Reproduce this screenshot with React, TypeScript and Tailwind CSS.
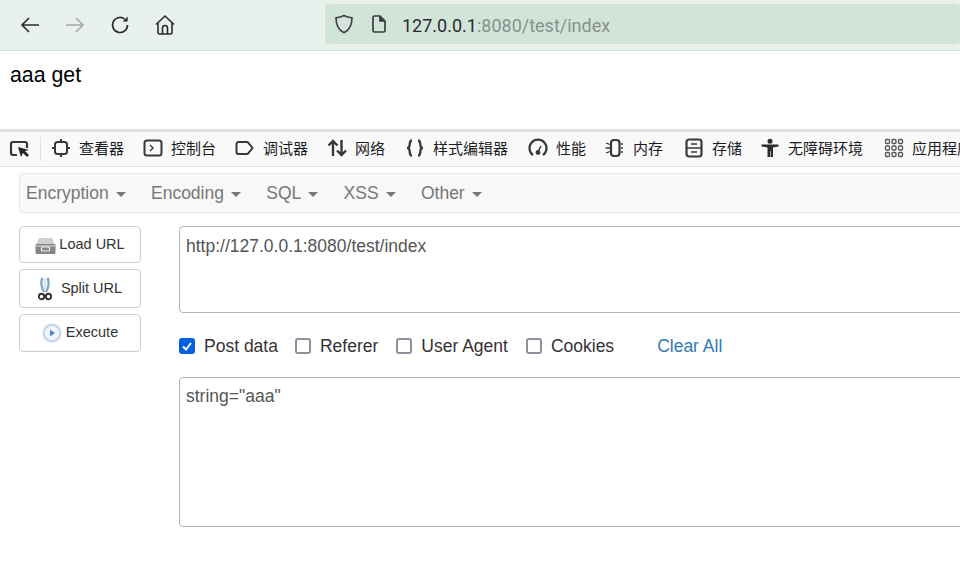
import React from "react";

const sans = "font-['Liberation_Sans','Noto_Sans_CJK_SC',sans-serif]";

function Tab({ icon, label, w }: { icon: React.ReactNode; label: string; w: string }) {
  return (
    <div className={`flex items-center shrink-0 ${w}`}>
      {icon}
      <span className="text-[15px] leading-[34px] text-[#1b1b1f] ml-[8px] mt-[-3px] font-['Noto_Sans_CJK_SC',sans-serif] whitespace-nowrap">{label}</span>
    </div>
  );
}

const S = "#38383c";
const ic = (children: React.ReactNode, w = 20) => (
  <svg width={w} height="20" viewBox="0 0 20 20" fill="none" stroke={S} strokeWidth="2" className="shrink-0 mt-[-2px]">{children}</svg>
);

function Menu({ label }: { label: string }) {
  return (
    <div className="flex items-center gap-[7px] text-[#777] text-[17.5px] shrink-0 mr-[25.3px]">
      <span>{label}</span>
      <span className="w-0 h-0 border-x-[5px] border-x-transparent border-t-[5px] border-t-[#777] mt-[2px]" />
    </div>
  );
}

function SideBtn({ icon, label, h, gap }: { icon: React.ReactNode; label: string; h: string; gap: string }) {
  return (
    <button className={`w-[122px] ${h} border border-[#ccc] rounded-[4px] bg-white flex items-center justify-center ${gap} text-[14.5px] text-[#333]`}>
      {icon}
      <span>{label}</span>
    </button>
  );
}

function Check({ label, checked, ml }: { label: string; checked?: boolean; ml?: string }) {
  return (
    <div className={`flex items-center gap-[9px] ${ml ?? ""}`}>
      {checked ? (
        <span className="w-[16px] h-[16px] rounded-[3px] bg-[#0060df] flex items-center justify-center">
          <svg width="12" height="12" viewBox="0 0 12 12" fill="none" stroke="#fff" strokeWidth="2"><path d="M2 6.5 5 9.5 10 3" /></svg>
        </span>
      ) : (
        <span className="w-[16px] h-[16px] rounded-[3px] border-2 border-[#8f8f9d] bg-white" />
      )}
      <span className="text-[17.5px] text-[#333]">{label}</span>
    </div>
  );
}

export default function App() {
  return (
    <div className={`w-[960px] h-[565px] overflow-hidden bg-white flex flex-col ${sans}`}>
      <div className="h-[51px] shrink-0 bg-[#e8f1ec] border-b border-[#d3e2da] flex items-center">
        <div className="flex items-center ml-[19px] gap-[23px] w-[306px] shrink-0">
          <svg width="22" height="22" viewBox="0 0 22 22" fill="none" stroke="#2b2b2e" strokeWidth="1.6"><path d="M20 11H3M10 4l-7 7 7 7" /></svg>
          <svg width="22" height="22" viewBox="0 0 22 22" fill="none" stroke="#a4aaa7" strokeWidth="1.6"><path d="M2 11h17M12 4l7 7-7 7" /></svg>
          <svg width="22" height="22" viewBox="0 0 22 22" fill="none" stroke="#2b2b2e" strokeWidth="1.7"><path d="M18.5 11a7.5 7.5 0 1 1-3-6" /><path d="M18.600 2.600v5h-5z" fill="#2b2b2e" stroke="none" /></svg>
          <svg width="22" height="22" viewBox="0 0 22 22" fill="none" stroke="#2b2b2e" strokeWidth="1.6"><path d="M2 10.500 11 2l9 8.500" /><path d="M4 9v9.500a1.500 1.500 0 0 0 1.500 1.500h11a1.500 1.500 0 0 0 1.500-1.500V9" /><path d="M8.500 20v-6a2.500 2.500 0 0 1 5 0v6" /></svg>
        </div>
        <div className="w-[635px] h-[40px] rounded-[4px] bg-[#d2e3da] flex items-center mt-[-2px] shrink-0">
          <svg width="22" height="22" viewBox="0 0 22 22" fill="none" stroke="#3b3b3f" strokeWidth="1.6" className="ml-[8px]"><path d="M11 2.500c2.500 1.500 5 2 8 2.200 0 6.500-2 12-8 15-6-3-8-8.500-8-15 3-.2 5.500-.7 8-2.200z" /></svg>
          <svg width="18" height="20" viewBox="0 0 18 20" fill="none" stroke="#3b3b3f" strokeWidth="1.700" className="ml-[15px]"><path d="M3 3.500A1.500 1.500 0 0 1 4.500 2H10l5 5v9.500a1.500 1.500 0 0 1-1.500 1.500h-9A1.500 1.500 0 0 1 3 16.500z" /><path d="M10 2v5h5" fill="#3b3b3f" /></svg>
          <span className="ml-[14px] mt-[2px] text-[18px] text-[#2b2b2e] font-['Roboto',sans-serif]">127.0.0.1<span className="text-[#85918b]">:8080/test/index</span></span>
        </div>
      </div>

      <div className="h-[78px] shrink-0 pl-[10px] pt-[12px] text-[21.3px] text-black leading-[24px]">aaa get</div>

      <div className="h-[3px] shrink-0 bg-[#e0e0e2]" />

      <div className="h-[35px] shrink-0 bg-[#f9f9fa] border-b border-[#e0e0e2] flex items-center">
        <svg width="22" height="20" viewBox="0 0 22 20" className="ml-[9px] shrink-0" fill="none"><path d="M8 16H4a2 2 0 0 1-2-2V5a2 2 0 0 1 2-2h12a2 2 0 0 1 2 2v4" stroke={S} strokeWidth="2.200" /><path d="M9 8l3 10 2-4 4 4 2-2-4-4 4-1z" fill="#26262a" /></svg>
        <div className="w-px h-[24px] bg-[#e0e0e2] ml-[9px] mr-[10px] shrink-0" />
        <Tab w="w-[92px]" label="查看器" icon={ic(<><rect x="4" y="4" width="12" height="12" rx="2.500" /><path d="M10 1v3M10 16v3M1 10h3M16 10h3" /></>)} />
        <Tab w="w-[92px]" label="控制台" icon={ic(<><rect x="1.500" y="2.500" width="17" height="15" rx="2.500" /><path d="M7 7l3 3-3 3" strokeWidth="1.400" /></>)} />
        <Tab w="w-[92px]" label="调试器" icon={ic(<path d="M3.500 4h8.500a1.500 1.500 0 0 1 1.200.6l4.300 5.400-4.300 5.400a1.500 1.500 0 0 1-1.200.6H3.500A2 2 0 0 1 1.500 14V6a2 2 0 0 1 2-2z" />)} />
        <Tab w="w-[78px]" label="网络" icon={ic(<g strokeWidth="2.400"><path d="M6 18V3M1.500 7.500 6 3l4.500 4.500" /><path d="M14.500 2v15M10 12.500l4.500 4.500 4.500-4.500" /></g>)} />
        <Tab w="w-[123px]" label="样式编辑器" icon={ic(<g strokeWidth="2.300"><path d="M7 2.500c-3 0-2 3.500-2.500 5.500-.3 1.200-1.500 2-2.500 2 1 0 2.200.8 2.500 2 .5 2-.5 5.500 2.500 5.500" /><path d="M13 2.500c3 0 2 3.500 2.500 5.500.3 1.200 1.500 2 2.500 2-1 0-2.200.8-2.500 2-.5 2 .5 5.500-2.500 5.500" /></g>)} />
        <Tab w="w-[77px]" label="性能" icon={ic(<><path d="M5 17a8.500 8.500 0 1 1 10 0" strokeWidth="2.200" /><circle cx="10" cy="14.500" r="2.400" fill={S} stroke="none" /><path d="M10 14l3-6" strokeWidth="1.500" /></>)} />
        <Tab w="w-[79px]" label="内存" icon={ic(<><rect x="6" y="2" width="8.500" height="16" rx="3" strokeWidth="2.200" /><path d="M1 5l4 1.500M.500 10H5M1 15l4-1.500M16 6h2M16 10h2M16 14h2" strokeWidth="1.300" /></>)} />
        <Tab w="w-[76px]" label="存储" icon={ic(<><rect x="2.500" y="1.500" width="15" height="17" rx="2.500" strokeWidth="2.200" /><path d="M2.500 10h15M7 6h6M7 14h6" strokeWidth="1.500" /></>)} />
        <Tab w="w-[124px]" label="无障碍环境" icon={<svg width="20" height="20" viewBox="0 0 20 20" className="shrink-0 mt-[-2px]" fill="#2c2c30"><circle cx="10" cy="3.300" r="2.500" /><path d="M1.500 6.500h17v2l-5.500 1v9.500h-2.200v-6h-.6v6H7.500V9.500L1.500 8.500z" /></svg>} />
        <Tab w="w-[90px]" label="应用程序" icon={<svg width="20" height="20" viewBox="0 0 20 20" className="shrink-0 mt-[-2px]" fill="none" stroke="#55555a" strokeWidth="1.300">{[3.5, 10, 16.5].flatMap((x) => [3.5, 10, 16.5].map((y) => <rect key={`${x}-${y}`} x={x - 2} y={y - 2} width="4" height="4" rx="1" />))}</svg>} />
      </div>

      <div className="flex-1 relative pl-[19px] pt-[6px]">
        <div className="h-[40px] w-[960px] bg-[#f8f8f8] border border-[#e7e7e7] rounded-[4px] flex items-center pl-[6px]">
          <Menu label="Encryption" />
          <Menu label="Encoding" />
          <Menu label="SQL" />
          <Menu label="XSS" />
          <Menu label="Other" />
        </div>

        <div className="flex mt-[13px]">
          <div className="w-[160px] shrink-0 flex flex-col gap-[6px]">
            <SideBtn h="h-[37px]" gap="gap-[3px]" label="Load URL" icon={
              <svg width="21" height="18" viewBox="0 0 21 18" className="mt-[3px]"><path d="M4 1h13l3 7H1z" fill="#cfcfcf" /><rect x="0.500" y="7" width="20" height="10" rx="1.500" fill="#858585" /><path d="M0.500 8h20v2H0.500z" fill="#b4b4b4" /><rect x="6.500" y="10" width="8" height="4" rx="1" fill="none" stroke="#f0f0f0" strokeWidth="1.200" /></svg>
            } />
            <SideBtn h="h-[39px]" gap="gap-[9px]" label="Split URL" icon={
              <svg width="14" height="24" viewBox="0 0 14 24" fill="none"><path d="M4.500 1C2.500 4 3 10 6 15M9.500 1c2 3 1.500 9-1.500 14" stroke="#7ea6c4" strokeWidth="2.400" /><path d="M7 2v10" stroke="#c4dbeb" strokeWidth="1.500" /><circle cx="3.500" cy="19.500" r="2.700" stroke="#333" strokeWidth="1.900" /><circle cx="10.500" cy="19.500" r="2.700" stroke="#333" strokeWidth="1.900" /></svg>
            } />
            <SideBtn h="h-[38px]" gap="gap-[4px]" label="Execute" icon={
              <svg width="20" height="20" viewBox="0 0 20 20"><circle cx="10" cy="10" r="9.500" fill="#c6d8ee" /><circle cx="10" cy="10" r="7" fill="#f2f6fb" /><path d="M8 6.500l5 3.500-5 3.500z" fill="#4f86c6" /></svg>
            } />
          </div>

          <div className="flex-1 flex flex-col">
            <div className="h-[87px] w-[800px] border border-[#b5b5b5] rounded-[4px] px-[6px] pt-[7px] text-[17.5px] leading-[24px] text-[#555]">http://127.0.0.1:8080/test/index</div>
            <div className="h-[64px] flex items-center pt-[2px]">
              <Check checked label="Post data" />
              <Check label="Referer" ml="ml-[17px]" />
              <Check label="User Agent" ml="ml-[18px]" />
              <Check label="Cookies" ml="ml-[18px]" />
              <span className="ml-[43px] text-[17.5px] text-[#337ab7]">Clear All</span>
            </div>
            <div className="h-[150px] w-[800px] border border-[#b5b5b5] rounded-[4px] px-[6px] pt-[6px] text-[17.5px] leading-[24px] text-[#555]">string="aaa"</div>
          </div>
        </div>
      </div>
    </div>
  );
}
